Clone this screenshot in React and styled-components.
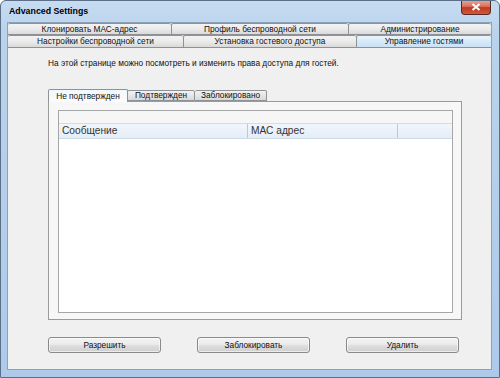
import React from "react";
import styled, { createGlobalStyle } from "styled-components";

const Global = createGlobalStyle`
  html, body { margin: 0; padding: 0; background: #ffffff; }
  body { font-family: "Liberation Sans", Arial, sans-serif; }
`;

const Window = styled.div`
  width: 500px;
  height: 378px;
  box-sizing: border-box;
  display: flex;
  flex-direction: column;
  background: linear-gradient(180deg, #c6dcf2 0px, #bad3ec 30px, #aecaea 100%);
  border: 1px solid #5b6f86;
  border-radius: 6px 6px 0 0;
  padding: 0 7px 7px 6px;
  overflow: hidden;
`;

const TitleBar = styled.div`
  height: 21px;
  flex: none;
  display: flex;
  align-items: flex-start;
  justify-content: space-between;
`;

const Title = styled.div`
  font-family: "Liberation Sans", Arial, sans-serif;
  font-weight: bold;
  font-size: 8.8px;
  color: #000;
  padding: 5px 0 0 2px;
`;

const CloseBtn = styled.div`
  width: 30px;
  height: 15px;
  margin-top: -1px;
  margin-right: 1px;
  box-sizing: border-box;
  border: 1px solid #5a2a24;
  border-top: none;
  border-radius: 0 0 4px 4px;
  background: linear-gradient(180deg, #e9a99c 0%, #d9735f 45%, #c0391f 55%, #cf5b3f 100%);
  display: flex;
  align-items: center;
  justify-content: center;
`;

const Client = styled.div`
  flex: 1;
  display: flex;
  flex-direction: column;
  background: #f0f0f0;
  border: 1px solid #8da2b8;
  box-sizing: border-box;
`;

const TabRow = styled.div`
  display: flex;
  height: ${(p) => p.$h}px;
  flex: none;
`;

const Tab = styled.div`
  width: ${(p) => p.$w}px;
  flex: none;
  box-sizing: border-box;
  border: 1px solid #8e9297;
  border-left: ${(p) => (p.$first ? "none" : "1px solid #8e9297")};
  border-right: none;
  border-radius: 2px 2px 0 0;
  background: ${(p) =>
    p.$active
      ? "linear-gradient(180deg, #eaf4fd 0%, #d7e9f9 50%, #c9e1f6 100%)"
      : "linear-gradient(180deg, #f2f2f2 0%, #ebebeb 50%, #d9d9d9 100%)"};
  font-size: 8.3px;
  color: #111;
  display: flex;
  align-items: center;
  justify-content: center;
  white-space: nowrap;
  line-height: 1;
`;

const Body = styled.div`
  flex: 1;
  display: flex;
  flex-direction: column;
  padding: 10px 0 0 40px;
`;

const Description = styled.div`
  font-size: 8.3px;
  color: #111;
  height: 12px;
`;

const InnerTabs = styled.div`
  display: flex;
  align-items: flex-end;
  margin-top: 19px;
  height: 12px;
  position: relative;
  z-index: 1;
`;

const InnerTab = styled.div`
  box-sizing: border-box;
  width: ${(p) => p.$w}px;
  height: ${(p) => (p.$active ? 13 : 11)}px;
  margin-right: ${(p) => (p.$active ? -1 : 0)}px;
  border: 1px solid #8e9297;
  border-bottom: ${(p) => (p.$active ? "none" : "1px solid #8e9297")};
  border-left: ${(p) => (p.$cont ? "none" : "1px solid #8e9297")};
  border-radius: 2px 2px 0 0;
  background: ${(p) =>
    p.$active
      ? "linear-gradient(180deg, #f0f8fe 0%, #fcfcfc 100%)"
      : "linear-gradient(180deg, #f2f2f2 0%, #e6e6e6 50%, #d8d8d8 100%)"};
  margin-bottom: ${(p) => (p.$active ? -1 : 0)}px;
  font-size: 8.3px;
  color: #111;
  display: flex;
  align-items: center;
  justify-content: center;
  white-space: nowrap;
  line-height: 1;
`;

const Panel = styled.div`
  width: 414px;
  height: 219px;
  box-sizing: border-box;
  border: 1px solid #9a9a9a;
  background: #f7f7f7;
  padding: 8px 8px 6px 9px;
  display: flex;
`;

const ListBox = styled.div`
  flex: 1;
  box-sizing: border-box;
  border: 1px solid #a6a6a6;
  background: #ffffff;
  display: flex;
  flex-direction: column;
`;

const ListTop = styled.div`
  height: 12px;
  background: #f6f6f6;
  flex: none;
`;

const Header = styled.div`
  display: flex;
  height: 14px;
  flex: none;
  background: linear-gradient(180deg, #f1f6fc 0%, #e4edf7 100%);
  border-top: 1px solid #d3dde9;
  border-bottom: 1px solid #d0dbe8;
`;

const HeaderCell = styled.div`
  width: ${(p) => (p.$w ? `${p.$w}px` : "auto")};
  flex: ${(p) => (p.$w ? "none" : "1")};
  box-sizing: border-box;
  border-right: ${(p) => (p.$w ? "1px solid #b9c8da" : "none")};
  padding-left: 3px;
  font-size: 10.2px;
  color: #333;
  display: flex;
  align-items: center;
  line-height: 1;
`;

const ButtonRow = styled.div`
  display: flex;
  gap: 36px;
  margin-top: 17px;
`;

const Button = styled.div`
  width: 113px;
  height: 16px;
  box-sizing: border-box;
  border: 1px solid #8a8a8a;
  border-radius: 3px;
  background: linear-gradient(180deg, #f3f3f3 0%, #ebebeb 45%, #dddddd 55%, #cfcfcf 100%);
  box-shadow: inset 0 0 0 1px rgba(255, 255, 255, 0.6);
  font-size: 8.3px;
  color: #111;
  display: flex;
  align-items: center;
  justify-content: center;
  line-height: 1;
`;

export default function App() {
  return (
    <>
      <Global />
      <Window>
        <TitleBar>
          <Title>Advanced Settings</Title>
          <CloseBtn>
            <svg width="10" height="8" viewBox="0 0 10 8">
              <path d="M1.5 1 L8.5 7 M8.5 1 L1.5 7" stroke="#ffffff" strokeWidth="2" />
            </svg>
          </CloseBtn>
        </TitleBar>
        <Client>
          <TabRow $h={12}>
            <Tab $w={163} $first>Клонировать МАС-адрес</Tab>
            <Tab $w={177}>Профиль беспроводной сети</Tab>
            <Tab $w={143}>Администрирование</Tab>
          </TabRow>
          <TabRow $h={13}>
            <Tab $w={175} $first>Настройки беспроводной сети</Tab>
            <Tab $w={173}>Установка гостевого доступа</Tab>
            <Tab $w={135} $active>Управление гостями</Tab>
          </TabRow>
          <Body>
            <Description>
              На этой странице можно посмотреть и изменить права доступа для гостей.
            </Description>
            <InnerTabs>
              <InnerTab $w={80} $active>Не подтвержден</InnerTab>
              <InnerTab $w={68}>Подтвержден</InnerTab>
              <InnerTab $w={72} $cont>Заблокировано</InnerTab>
            </InnerTabs>
            <Panel>
              <ListBox>
                <ListTop />
                <Header>
                  <HeaderCell $w={189}>Сообщение</HeaderCell>
                  <HeaderCell $w={150}>МАС адрес</HeaderCell>
                  <HeaderCell />
                </Header>
              </ListBox>
            </Panel>
            <ButtonRow>
              <Button>Разрешить</Button>
              <Button>Заблокировать</Button>
              <Button>Удалить</Button>
            </ButtonRow>
          </Body>
        </Client>
      </Window>
    </>
  );
}
